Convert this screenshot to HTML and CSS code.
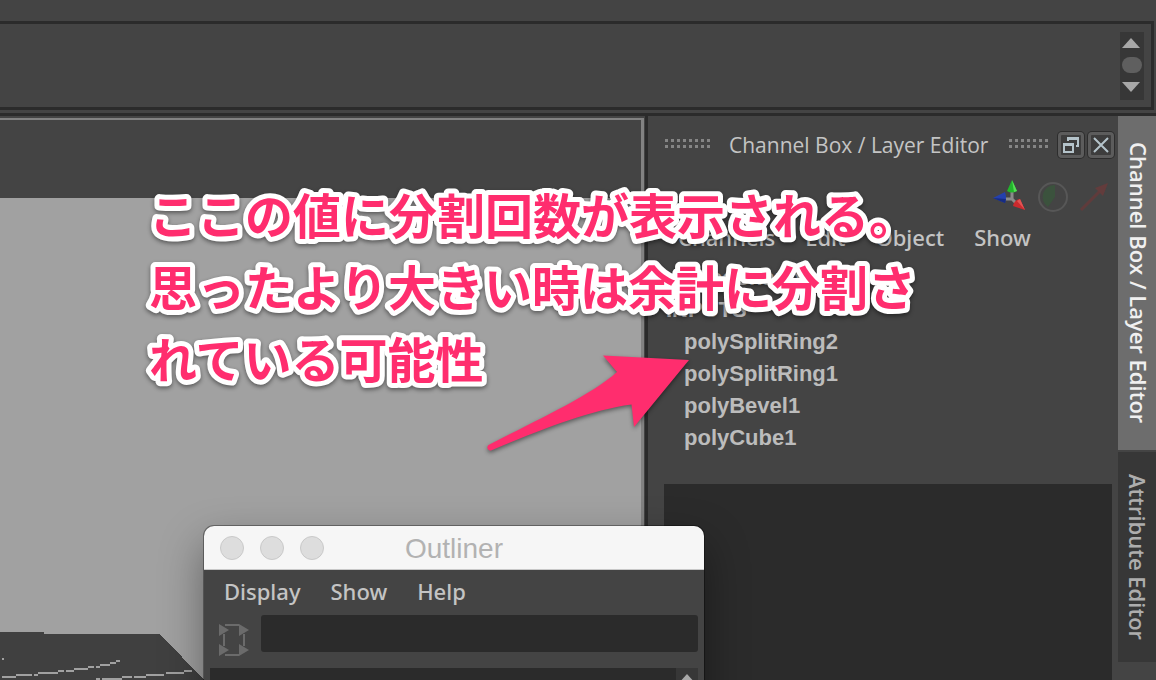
FILE: index.html
```
<!DOCTYPE html>
<html lang="ja">
<head>
<meta charset="utf-8">
<title>Channel Box / Layer Editor</title>
<link rel="stylesheet" href="styles.css">
</head>
<body>
<div class="app">
  <header class="shelf">
    <div class="shelf-box">
      <div class="shelf-scroll">
        <button class="plain" aria-label="Scroll up"><svg width="18" height="10" viewBox="0 0 18 10"><path d="M0 10L9 0L18 10Z" fill="#a8a8a8"/></svg></button>
        <span class="knob"></span>
        <button class="plain" aria-label="Scroll down"><svg width="18" height="10" viewBox="0 0 18 10"><path d="M0 0L9 10L18 0Z" fill="#a8a8a8"/></svg></button>
      </div>
    </div>
  </header>
  <main class="workspace">
    <section class="viewport" aria-label="Viewport">
      <div class="viewport-bar"></div>
      <div class="scene">
        <svg class="mesh" width="204" height="48" viewBox="0 0 204 48" shape-rendering="crispEdges">
          <path d="M0 0H44V2H160L204 48H0Z" fill="#404040"/>
          <path d="M2 26h2v2h-2zM2 44h14v2h-14zM16 42h16v2h-16zM34 42h4v2h-4zM38 40h20v2h-20zM58 38h6v2h-6zM66 38h8v2h-8zM74 36h14v2h-14zM88 34h6v2h-6zM96 34h4v2h-4zM100 32h10v2h-10zM110 30h6v2h-6zM116 28h4v2h-4zM96 46h4v2h-4zM102 46h20v2h-20zM122 44h10v2h-10zM134 44h12v2h-12zM146 42h18v2h-18zM166 40h18v2h-18zM184 38h8v2h-8z" fill="#a1a1a1"/>
        </svg>
      </div>
    </section>
    <section class="panel">
      <div class="panel-head">
        <span class="grip"></span>
        <h1 class="panel-title">Channel Box / Layer Editor</h1>
        <span class="grip grip-short"></span>
        <div class="head-buttons">
          <button class="tool" aria-label="Float"><svg width="16" height="16" viewBox="0 0 16 16" fill="none" stroke="#b4c3ca" stroke-width="2"><path d="M5 4V1H15V9H13" /><path d="M1 7H10V15H1Z"/><path d="M0 7.500H11M5 1.500H16" stroke-width="3"/></svg></button>
          <button class="tool" aria-label="Close"><svg width="16" height="16" viewBox="0 0 16 16" fill="none" stroke="#b4c3ca" stroke-width="2"><path d="M1 1L15 15M15 1L1 15"/></svg></button>
        </div>
      </div>
      <div class="modes">
        <svg width="34" height="34" viewBox="0 0 34 34"><path d="M19 11V19M11 19H19L24 24" fill="none" stroke="#8b8b8b" stroke-width="3"/><path d="M19 0L24 11Q19 14 14 11Z" fill="#22b52c"/><path d="M19 0L21 12L24 11Z" fill="#56df55"/><path d="M0 18L12 12Q14 18 12 23Z" fill="#2440ae"/><path d="M0 18L12 23L13 19Z" fill="#172c83"/><path d="M32 30L20 26Q21 20 27 19Z" fill="#cb2a2e"/><path d="M32 30L24 21L27 19Z" fill="#e25353"/></svg>
        <svg width="32" height="32" viewBox="0 0 32 32"><circle cx="16" cy="16" r="14" fill="#444" stroke="#575757" stroke-width="2"/><path d="M18 4V16L11 26A12 12 0 0 1 18 4Z" fill="#3b523d"/></svg>
        <svg width="30" height="30" viewBox="0 0 30 30"><path d="M2 28L21 9" stroke="#603b3b" stroke-width="3"/><path d="M29 1L24 14L16 6Z" fill="#633c3c"/></svg>
      </div>
      <nav class="menu panel-menu">
        <button class="plain">Channels</button><button class="plain">Edit</button><button class="plain">Object</button><button class="plain">Show</button>
      </nav>
      <div class="channels">
        <p class="node">pCubeShape1</p>
        <p class="heading">INPUTS</p>
        <ul class="inputs"><li>polySplitRing2</li><li>polySplitRing1</li><li>polyBevel1</li><li>polyCube1</li></ul>
      </div>
      <div class="layers"></div>
    </section>
    <div class="tabs" role="tablist">
      <button class="tab tab-on" role="tab" aria-selected="true">Channel Box / Layer Editor</button>
      <button class="tab tab-second" role="tab" aria-selected="false">Attribute Editor</button>
    </div>
  </main>

  <section class="window">
    <div class="titlebar">
      <div class="lights"><button class="light" aria-label="Close"></button><button class="light" aria-label="Minimize"></button><button class="light" aria-label="Zoom"></button></div>
      <h2 class="window-title">Outliner</h2>
    </div>
    <nav class="menu window-menu"><button class="plain">Display</button><button class="plain">Show</button><button class="plain">Help</button></nav>
    <div class="search-row">
      <svg width="30" height="34" viewBox="0 0 30 34"><path d="M6 2H20M6 32H20M5 11V23M25 11V23" stroke="#6b6b6b" stroke-width="2"/><path d="M0 1L10 7L0 13ZM20 1L30 7L20 13ZM0 21L10 27L0 33ZM20 21L30 27L20 33Z" fill="#6b6b6b"/></svg>
      <input class="search" type="text" aria-label="Filter">
    </div>
    <div class="tree">
      <div class="tree-list"></div>
      <div class="tree-scroll"><svg width="18" height="10" viewBox="0 0 18 10"><path d="M0 10L9 0L18 10Z" fill="#a8a8a8"/></svg></div>
    </div>
  </section>

  <svg class="arrow" width="210" height="110" viewBox="480 345 210 110"><path d="M603 355.500L689 360L634 427L631.500 404.500C590 410 540 430 491 450.500C487 451 486 446 489.500 444.500C535 421 590 396 617 372Z" fill="#ff2d6e"/></svg>
  <svg class="note" width="800" height="230" viewBox="0 0 800 230">
    <text x="9" y="59">ここの値に分割回数が表示される。</text>
    <text x="9" y="131">思ったより大きい時は余計に分割さ</text>
    <text x="9" y="203">れている可能性</text>
  </svg>
</div>
</body>
</html>
```
FILE: styles.css
```
* { box-sizing: border-box; }
body {
  margin: 0;
  background: #444;
  color: #c4c4c4;
  font-family: "Noto Sans", "Open Sans", sans-serif;
  font-size: 22px;
}
h1, h2, p, ul { margin: 0; padding: 0; font-weight: 400; font-size: 22px; list-style: none; }
button { font: inherit; color: inherit; border: 0; margin: 0; padding: 0; }
svg { display: block; }
.plain { background: none; }
.app {
  position: relative;
  height: 100vh;
  overflow: hidden;
  display: flex;
  flex-direction: column;
}
.shelf {
  flex: none;
  padding: 21px 2px 3px 0;
  border-bottom: 3px solid #2b2b2b;
}
.shelf-box {
  display: flex;
  justify-content: flex-end;
  padding: 8px 7px 7px;
  border: 3px solid #2b2b2b;
  border-left: 0;
}
.shelf-scroll {
  width: 24px;
  height: 68px;
  padding: 6px 2px 8px;
  background: #373737;
  display: flex;
  flex-direction: column;
  justify-content: space-between;
}
.knob { width: 20px; height: 16px; border-radius: 8px; background: #5f5f5f; }
.workspace { flex: 1; min-height: 0; display: flex; }
.viewport {
  flex: 1;
  margin-top: 2px;
  border-top: 2px solid #828282;
  border-right: 3px solid #828282;
  display: flex;
  flex-direction: column;
}
.viewport-bar { height: 78px; background: #444; }
.scene { flex: 1; background: #a1a1a1; display: flex; align-items: flex-end; }
.panel {
  width: 473px;
  margin-left: 1px;
  border-left: 3px solid #2b2b2b;
  display: flex;
  flex-direction: column;
  padding: 13px 4px 0 0;
}
.panel-head { display: flex; align-items: center; height: 32px; padding-left: 14px; }
.panel-title { margin-left: 19px; flex: 1; white-space: nowrap; font-family: "Open Sans", sans-serif; font-size: 21px; font-weight: 500; }
.grip {
  width: 48px;
  height: 12px;
  background: conic-gradient(from 90deg at 3px 3px, #444 270deg, #858585 0) 0 0 / 6px 6px;
}
.grip-short { width: 42px; margin-right: 10px; }
.head-buttons { display: flex; gap: 4px; }
.tool {
  width: 26px;
  height: 26px;
  display: grid;
  place-items: center;
  background: #3d3d3d;
  border: 3px solid #5c5c5c;
  border-radius: 4px;
  box-shadow: 0 0 0 1px #2d2d2d;
}
.modes { display: flex; align-items: center; justify-content: flex-end; gap: 10px; height: 34px; margin-top: 19px; padding-right: 5px; }
.menu { display: flex; gap: 30px; font-weight: 500; }
.panel-menu { padding-left: 30px; margin-top: 7px; height: 32px; align-items: center; }
.channels {
  margin-top: 9px;
  padding-left: 18px;
  color: #bcbcbc;
  font-family: "Liberation Sans", Arial, sans-serif;
  line-height: 32px;
}
.node, .heading, .inputs { font-weight: 700; }
.inputs { padding-left: 18px; }
.layers { flex: 1; margin: 30px 2px 0 16px; background: #2b2b2b; }
.tabs { width: 38px; display: flex; flex-direction: column; gap: 2px; }
.tab {
  height: 334px;
  padding-left: 4px;
  writing-mode: vertical-rl;
  text-align: center;
  white-space: nowrap;
  background: #6d6d6d;
  color: #f0f0f0;
  font-family: "Open Sans", sans-serif;
  font-weight: 600;
}
.tab-second { height: 210px; padding-left: 2px; background: #373737; color: #adadad; }
.window {
  position: absolute;
  left: 204px;
  top: 526px;
  width: 500px;
  height: 240px;
  border-radius: 10px;
  background: #444;
  overflow: hidden;
  box-shadow: 0 0 0 1px rgba(0, 0, 0, .35), 0 18px 44px rgba(0, 0, 0, .4);
}
.titlebar {
  position: relative;
  height: 44px;
  background: #f6f6f6;
  border-bottom: 1px solid #c8c8c8;
  display: flex;
  align-items: center;
  justify-content: center;
}
.lights { position: absolute; left: 16px; top: 10px; display: flex; gap: 16px; }
.light { width: 24px; height: 24px; border-radius: 50%; background: #ddd; border: 1px solid #c9c9c9; }
.window-title { padding-top: 2px; color: #b2b2b2; font-family: "Liberation Sans", Arial, sans-serif; font-size: 28px; }
.window-menu { height: 42px; padding-left: 20px; align-items: center; }
.search-row { display: flex; align-items: flex-start; gap: 12px; padding: 3px 6px 0 15px; }
.search-row svg { margin-top: 8px; }
.search { flex: 1; min-width: 0; height: 37px; border: 0; border-radius: 3px; background: #2b2b2b; color: #c4c4c4; }
.tree { display: flex; height: 100px; margin: 11px 6px 0; }
.tree-list { flex: 1; background: #2b2b2b; }
.tree-scroll { width: 22px; padding: 6px 2px; background: #373737; }
.arrow { position: absolute; left: 480px; top: 345px; filter: drop-shadow(0 2px 2px rgba(0, 0, 0, .45)); }
.note {
  position: absolute;
  left: 140px;
  top: 175px;
  fill: #ff2d6e;
  font-family: "Noto Sans CJK JP", sans-serif;
  font-size: 48px;
  font-weight: 700;
  stroke: #fff;
  stroke-width: 10px;
  stroke-linejoin: round;
  paint-order: stroke;
  filter: drop-shadow(0 2px 2px rgba(0, 0, 0, .45));
}
```
